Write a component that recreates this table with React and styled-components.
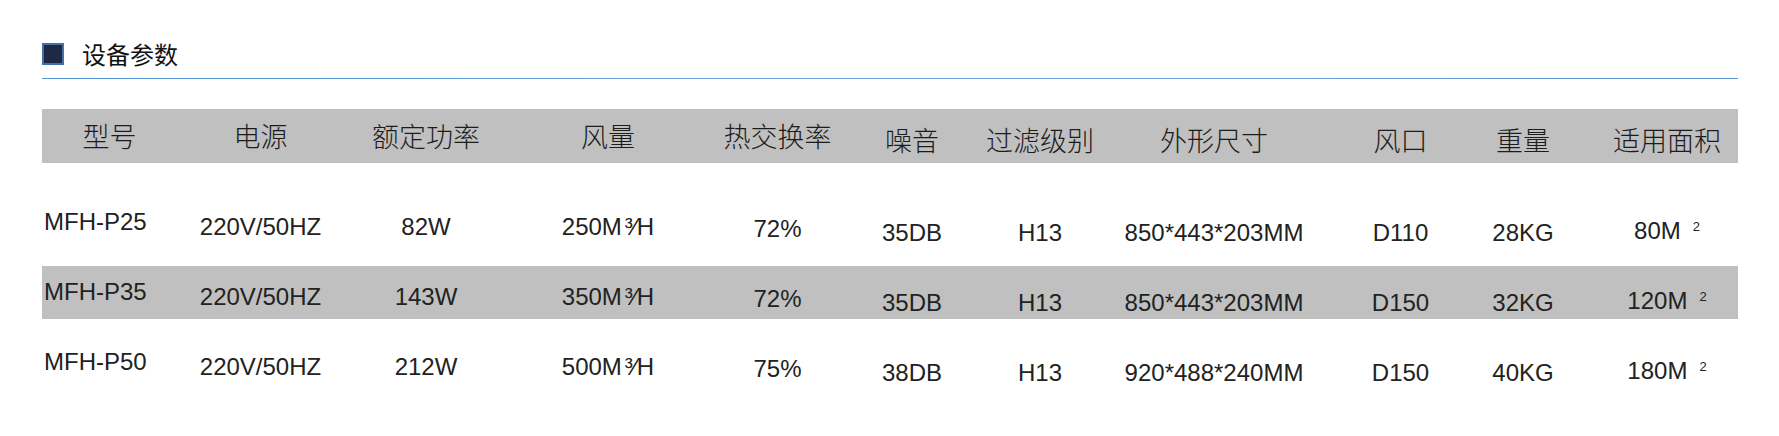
import React from "react";
import styled, { createGlobalStyle } from "styled-components";

// column geometry: width, header nudge, body nudge (px, + moves down)
const columns = [
  { key: "model", title: "型号", width: 135, hdy: -1, dy: -1, align: "flex-start", pad: 2 },
  { key: "power", title: "电源", width: 167, hdy: -1, dy: 4 },
  { key: "rated", title: "额定功率", width: 164, hdy: -1, dy: 4 },
  { key: "air", title: "风量", width: 200, hdy: -1, dy: 4 },
  { key: "heat", title: "热交换率", width: 139, hdy: -1, dy: 6 },
  { key: "noise", title: "噪音", width: 130, hdy: 3, dy: 10 },
  { key: "filter", title: "过滤级别", width: 126, hdy: 3, dy: 10 },
  { key: "size", title: "外形尺寸", width: 222, hdy: 3, dy: 10 },
  { key: "port", title: "风口", width: 151, hdy: 3, dy: 10 },
  { key: "weight", title: "重量", width: 94, hdy: 3, dy: 10 },
  { key: "area", title: "适用面积", width: 168, hdy: 3, dy: 8, pad: 26 },
];

// m³/h written the way the sheet does, cube over a fraction slash
const Flow = ({ v }) => (
  <>
    {v}M<PerUnit>³⁄H</PerUnit>
  </>
);

const Area = ({ v }) => (
  <>
    {v}M
    <Square>2</Square>
  </>
);

const rows = [
  {
    model: "MFH-P25", power: "220V/50HZ", rated: "82W", air: <Flow v="250" />,
    heat: "72%", noise: "35DB", filter: "H13", size: "850*443*203MM",
    port: "D110", weight: "28KG", area: <Area v="80" />,
  },
  {
    model: "MFH-P35", power: "220V/50HZ", rated: "143W", air: <Flow v="350" />,
    heat: "72%", noise: "35DB", filter: "H13", size: "850*443*203MM",
    port: "D150", weight: "32KG", area: <Area v="120" />,
  },
  {
    model: "MFH-P50", power: "220V/50HZ", rated: "212W", air: <Flow v="500" />,
    heat: "75%", noise: "38DB", filter: "H13", size: "920*488*240MM",
    port: "D150", weight: "40KG", area: <Area v="180" />,
  },
];

const template = columns.map(c => `${c.width}px`).join(" ");

export default function App() {
  return (
    <Page>
      <GlobalStyle />
      <TitleRow>
        <Marker />
        <Title>设备参数</Title>
      </TitleRow>
      <Divider />
      <Table>
        <HeaderRow>
          {columns.map(c => (
            <HeaderCell key={c.key} $dy={c.hdy} $pad={c.key === "area" ? c.pad : 0}>
              {c.title}
            </HeaderCell>
          ))}
        </HeaderRow>
        <Body>
          {rows.map((r, i) => (
            <Row key={r.model} $shade={i % 2 === 1}>
              {columns.map(c => (
                <Cell key={c.key} $dy={c.dy} $align={c.align} $pad={c.pad || 0}>
                  {r[c.key]}
                </Cell>
              ))}
            </Row>
          ))}
        </Body>
      </Table>
    </Page>
  );
}

const GlobalStyle = createGlobalStyle`
  body {
    margin: 0;
    background: #fff;
    font-family: "Liberation Sans", "Noto Sans CJK SC", sans-serif;
  }
`;

const Page = styled.div`
  width: 1779px;
  box-sizing: border-box;
  padding: 43px 41px 0 42px;
`;

const TitleRow = styled.div`
  display: flex;
  align-items: center;
  gap: 18px;
  height: 22px;
`;

const Marker = styled.span`
  width: 22px;
  height: 22px;
  box-sizing: border-box;
  background: #1f2845;
  border: 2px solid #4470a2;
`;

const Title = styled.h2`
  margin: 0;
  font-family: "Noto Sans CJK SC", sans-serif;
  font-size: 24px;
  font-weight: 400;
  line-height: 22px;
  color: #111;
`;

const Divider = styled.div`
  height: 1px;
  margin-top: 13px;
  background: linear-gradient(90deg, #4f92d6 0%, #6ea6de 45%, #6aa3dc 70%, #5895d2 100%);
`;

const Table = styled.div`
  margin-top: 30px;
`;

const HeaderRow = styled.div`
  display: grid;
  grid-template-columns: ${template};
  height: 54px;
  background: #c0c0c0;
`;

const HeaderCell = styled.div`
  display: flex;
  align-items: center;
  justify-content: center;
  box-sizing: border-box;
  padding-top: ${p => Math.max(0, p.$dy * 2)}px;
  padding-bottom: ${p => Math.max(0, -p.$dy * 2)}px;
  padding-left: ${p => p.$pad}px;
  font-family: "Noto Sans CJK SC", sans-serif;
  font-size: 27px;
  font-weight: 300;
  line-height: 27px;
  color: #1c1c1c;
  white-space: nowrap;
`;

const Body = styled.div`
  display: grid;
  row-gap: 17px;
  padding-top: 33px;
`;

const Row = styled.div`
  display: grid;
  grid-template-columns: ${template};
  height: 53px;
  background: ${p => (p.$shade ? "#c0c0c0" : "transparent")};
`;

const Cell = styled.div`
  display: flex;
  align-items: center;
  justify-content: ${p => p.$align || "center"};
  box-sizing: border-box;
  padding-top: ${p => Math.max(0, p.$dy * 2)}px;
  padding-bottom: ${p => Math.max(0, -p.$dy * 2)}px;
  padding-left: ${p => p.$pad}px;
  font-size: 24px;
  line-height: 24px;
  color: #222;
  white-space: nowrap;
`;

const PerUnit = styled.span`
  margin-left: 3px;
`;

const Square = styled.sup`
  font-size: 13px;
  line-height: 0;
  margin-left: 12px;
  position: relative;
  top: -4px;
`;
